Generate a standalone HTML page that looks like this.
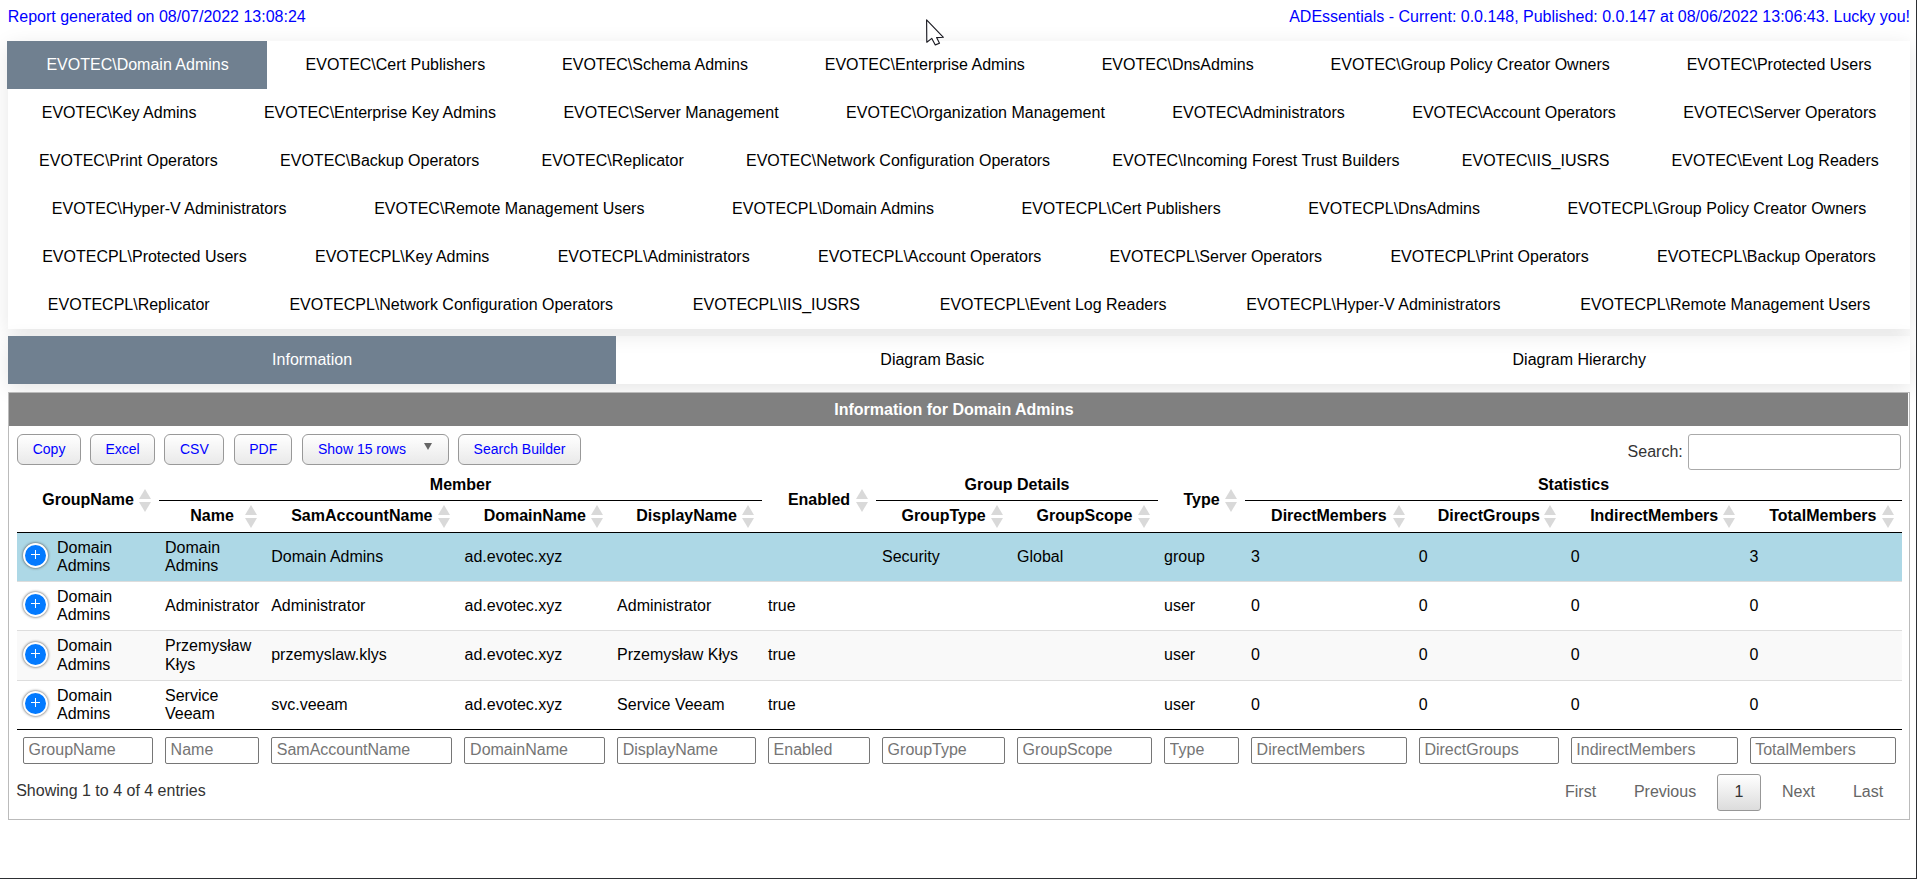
<!DOCTYPE html>
<html>
<head>
<meta charset="utf-8">
<style>
*{box-sizing:border-box}
html,body{margin:0;padding:0}
body{width:1917px;height:879px;overflow:hidden;position:relative;background:#fff;font-family:"Liberation Sans",sans-serif;font-size:16px;color:#000}
.abs{position:absolute}
#hdrL{position:absolute;left:7.7px;top:8px;color:#00f;line-height:18px;white-space:nowrap}
#hdrR{position:absolute;right:7px;top:8px;color:#00f;line-height:18px;white-space:nowrap}
.tabs{position:absolute;left:8px;width:1902px;display:flex;flex-wrap:wrap;background:transparent;box-shadow:0 5px 20px rgba(0,0,0,0.10)}
.tabs>div{flex-grow:1;padding:15px 28px;line-height:18px;text-align:center;white-space:nowrap;color:#000}
.tabs>div.act{background:#708090;color:#fff}
#tabs1{top:41px}
#tabs2{top:336px}
#act1x{position:absolute;left:7px;top:41px;width:1px;height:48px;background:#708090;z-index:3}
#section{position:absolute;left:8px;top:392px;width:1902px;height:428px;border:1px solid #bbb;background:#fff}
#ttl{position:absolute;left:0;top:0;width:1899px;height:33px;padding-right:9px;background:#808080;color:#fff;font-weight:bold;text-align:center;line-height:33px}
.btn{position:absolute;top:434px;height:31px;border:1px solid #999;border-radius:6px;background:linear-gradient(to bottom,#fff 0%,#e9e9e9 100%);color:#00f;font-size:14px;line-height:29px;padding:0;text-align:center;white-space:nowrap}
#cursor{position:absolute;left:0;top:0;z-index:50}
.caret{position:absolute;left:120.6px;top:8.2px;width:0;height:0;border-left:4.3px solid transparent;border-right:4.3px solid transparent;border-top:7.6px solid #666}
#slbl{position:absolute;left:1627.6px;top:443px;color:#333;line-height:18px;white-space:nowrap}
#sinp{position:absolute;left:1688.3px;top:434.3px;width:212.4px;height:35.4px;border:1px solid #aaa;border-radius:3px;background:#fff}
#info{position:absolute;left:16.2px;top:782px;color:#333;line-height:18px;white-space:nowrap}
.pg{position:absolute;top:774px;height:36.6px;line-height:34.6px;text-align:center;color:#666;border:1px solid transparent;border-radius:3px;white-space:nowrap}
.pg.cur{color:#333;border:1px solid #979797;background:linear-gradient(to bottom,#fff 0%,#dcdcdc 100%)}

#dt{position:absolute;left:17px;top:468.875px;width:1885px;table-layout:fixed;border-collapse:separate;border-spacing:0;font-size:16px;z-index:5}
#dt th,#dt td{padding:6px;line-height:18.125px;vertical-align:middle}
#dt thead th{line-height:19px}
#dt thead th{font-weight:bold;text-align:center;position:relative}
#dt thead tr:first-child th.cs{border-bottom:1px solid #000}
#dt thead tr:last-child th,#dt thead th.rs{border-bottom:1px solid #000}
#dt td{text-align:left;border-top:1px solid #ddd}
#dt tbody tr:first-child td{border-top:none}
#dt tbody tr.sel td{background:#add8e6}
#dt tbody tr.odd td{background:#f9f9f9}
#dt tfoot th{border-top:1px solid #000;padding:7px 6px 6px 6px;font-weight:normal}
#dt tfoot input{display:block;width:100%;height:27px;border:1px solid #767676;border-radius:2px;padding:0 4px 0 4.6px;font-family:"Liberation Sans",sans-serif;font-size:16px;color:#000;background:#fff;margin:0}
#dt tfoot input::placeholder{color:#757575}
.ht{position:relative;top:-1px}
.sa{position:absolute;right:7.3px;top:50%;width:13px;height:23px;margin-top:-11.5px}
.sa:before,.sa:after{content:"";position:absolute;left:0;width:0;height:0;border-left:6.5px solid transparent;border-right:6.5px solid transparent}
.sa:before{top:0;border-bottom:10.5px solid #d9d9d9}
.sa:after{bottom:0;border-top:10.5px solid #d9d9d9}
td.c0{padding-left:40px !important;position:relative}
.plus{position:absolute;left:6px;top:50%;margin-top:-14px;width:25px;height:25px;border-radius:50%;background:#037aff;border:2px solid #fff;box-shadow:0 0 3px #444}
.plus:before{content:"";position:absolute;left:9.5px;top:5px;width:1px;height:9px;background:#fff}
.plus:after{content:"";position:absolute;left:5.5px;top:9px;width:9px;height:1px;background:#fff}
#rb{position:absolute;left:1916px;top:0;width:1px;height:879px;background:#2d2f33;z-index:60}
#bb{position:absolute;left:0;top:878px;width:1917px;height:1px;background:#2d2f33;z-index:60}
</style>
</head>
<body>
<div id="hdrL">Report generated on 08/07/2022 13:08:24</div>
<div id="hdrR">ADEssentials - Current: 0.0.148, Published: 0.0.147 at 08/06/2022 13:06:43. Lucky you!</div>

<div class="tabs" id="tabs1">
<div class="act">EVOTEC\Domain Admins</div>
<div>EVOTEC\Cert Publishers</div>
<div>EVOTEC\Schema Admins</div>
<div>EVOTEC\Enterprise Admins</div>
<div>EVOTEC\DnsAdmins</div>
<div>EVOTEC\Group Policy Creator Owners</div>
<div>EVOTEC\Protected Users</div>
<div>EVOTEC\Key Admins</div>
<div>EVOTEC\Enterprise Key Admins</div>
<div>EVOTEC\Server Management</div>
<div>EVOTEC\Organization Management</div>
<div>EVOTEC\Administrators</div>
<div>EVOTEC\Account Operators</div>
<div>EVOTEC\Server Operators</div>
<div>EVOTEC\Print Operators</div>
<div>EVOTEC\Backup Operators</div>
<div>EVOTEC\Replicator</div>
<div>EVOTEC\Network Configuration Operators</div>
<div>EVOTEC\Incoming Forest Trust Builders</div>
<div>EVOTEC\IIS_IUSRS</div>
<div>EVOTEC\Event Log Readers</div>
<div>EVOTEC\Hyper-V Administrators</div>
<div>EVOTEC\Remote Management Users</div>
<div>EVOTECPL\Domain Admins</div>
<div>EVOTECPL\Cert Publishers</div>
<div>EVOTECPL\DnsAdmins</div>
<div>EVOTECPL\Group Policy Creator Owners</div>
<div>EVOTECPL\Protected Users</div>
<div>EVOTECPL\Key Admins</div>
<div>EVOTECPL\Administrators</div>
<div>EVOTECPL\Account Operators</div>
<div>EVOTECPL\Server Operators</div>
<div>EVOTECPL\Print Operators</div>
<div>EVOTECPL\Backup Operators</div>
<div>EVOTECPL\Replicator</div>
<div>EVOTECPL\Network Configuration Operators</div>
<div>EVOTECPL\IIS_IUSRS</div>
<div>EVOTECPL\Event Log Readers</div>
<div>EVOTECPL\Hyper-V Administrators</div>
<div>EVOTECPL\Remote Management Users</div>
</div>

<div id="act1x"></div>
<div class="tabs" id="tabs2">
<div class="act">Information</div>
<div>Diagram Basic</div>
<div>Diagram Hierarchy</div>
</div>

<div id="section">
<div id="ttl">Information for Domain Admins</div>
</div>

<!--TOOLBAR-->
<div class="btn" style="left:17.3px;width:63.5px">Copy</div>
<div class="btn" style="left:90.1px;width:65px">Excel</div>
<div class="btn" style="left:164.2px;width:60.3px">CSV</div>
<div class="btn" style="left:234.1px;width:58.4px">PDF</div>
<div class="btn" style="left:302.4px;width:146.2px;text-align:left;padding-left:14.6px">Show 15 rows<i class="caret"></i></div>
<div class="btn" style="left:458.2px;width:122.6px">Search Builder</div>
<div id="slbl">Search:</div>
<div id="sinp"></div>
<div id="info">Showing 1 to 4 of 4 entries</div>
<div class="pg" style="left:1548px;width:65.1px">First</div>
<div class="pg" style="left:1617px;width:96px">Previous</div>
<div class="pg cur" style="left:1717.1px;width:43.6px">1</div>
<div class="pg" style="left:1765px;width:67px">Next</div>
<div class="pg" style="left:1836px;width:64px">Last</div>
<!--/TOOLBAR-->
<!--TABLE--><table id="dt"><colgroup><col style="width:142px"><col style="width:106.2px"><col style="width:193.3px"><col style="width:152.6px"><col style="width:150.9px"><col style="width:114px"><col style="width:135px"><col style="width:147px"><col style="width:87px"><col style="width:167.8px"><col style="width:151.9px"><col style="width:178.9px"><col style="width:158.4px"></colgroup><thead><tr><th rowspan="2" class="rs"><span class="ht">GroupName</span><i class="sa"></i></th><th colspan="4" class="cs">Member</th><th rowspan="2" class="rs"><span class="ht">Enabled</span><i class="sa"></i></th><th colspan="2" class="cs">Group Details</th><th rowspan="2" class="rs"><span class="ht">Type</span><i class="sa"></i></th><th colspan="4" class="cs">Statistics</th></tr><tr><th><span class="ht">Name</span><i class="sa"></i></th><th><span class="ht">SamAccountName</span><i class="sa"></i></th><th><span class="ht">DomainName</span><i class="sa"></i></th><th><span class="ht">DisplayName</span><i class="sa"></i></th><th><span class="ht">GroupType</span><i class="sa"></i></th><th><span class="ht">GroupScope</span><i class="sa"></i></th><th><span class="ht">DirectMembers</span><i class="sa"></i></th><th><span class="ht">DirectGroups</span><i class="sa"></i></th><th><span class="ht">IndirectMembers</span><i class="sa"></i></th><th><span class="ht">TotalMembers</span><i class="sa"></i></th></tr></thead><tbody><tr class="sel"><td class="c0"><i class="plus"></i><span>Domain<br>Admins</span></td><td>Domain<br>Admins</td><td>Domain Admins</td><td>ad.evotec.xyz</td><td></td><td></td><td>Security</td><td>Global</td><td>group</td><td>3</td><td>0</td><td>0</td><td>3</td></tr><tr class=""><td class="c0"><i class="plus"></i><span>Domain<br>Admins</span></td><td>Administrator</td><td>Administrator</td><td>ad.evotec.xyz</td><td>Administrator</td><td>true</td><td></td><td></td><td>user</td><td>0</td><td>0</td><td>0</td><td>0</td></tr><tr class="odd"><td class="c0"><i class="plus"></i><span>Domain<br>Admins</span></td><td>Przemysław<br>Kłys</td><td>przemyslaw.klys</td><td>ad.evotec.xyz</td><td>Przemysław Kłys</td><td>true</td><td></td><td></td><td>user</td><td>0</td><td>0</td><td>0</td><td>0</td></tr><tr class=""><td class="c0"><i class="plus"></i><span>Domain<br>Admins</span></td><td>Service<br>Veeam</td><td>svc.veeam</td><td>ad.evotec.xyz</td><td>Service Veeam</td><td>true</td><td></td><td></td><td>user</td><td>0</td><td>0</td><td>0</td><td>0</td></tr></tbody><tfoot><tr><th><input type="text" placeholder="GroupName"></th><th><input type="text" placeholder="Name"></th><th><input type="text" placeholder="SamAccountName"></th><th><input type="text" placeholder="DomainName"></th><th><input type="text" placeholder="DisplayName"></th><th><input type="text" placeholder="Enabled"></th><th><input type="text" placeholder="GroupType"></th><th><input type="text" placeholder="GroupScope"></th><th><input type="text" placeholder="Type"></th><th><input type="text" placeholder="DirectMembers"></th><th><input type="text" placeholder="DirectGroups"></th><th><input type="text" placeholder="IndirectMembers"></th><th><input type="text" placeholder="TotalMembers"></th></tr></tfoot></table><!--/TABLE-->

<svg id="cursor" width="1917" height="60" viewBox="0 0 1917 60"><polygon points="926.6,19.8 926.8,42.2 931.8,38.4 935.3,44.9 939.5,43.2 936.6,37.6 943.4,37.3" fill="#fff" stroke="#1a1a22" stroke-width="1.15" stroke-linejoin="round"/></svg>
<div id="rb"></div><div id="bb"></div>
</body>
</html>
